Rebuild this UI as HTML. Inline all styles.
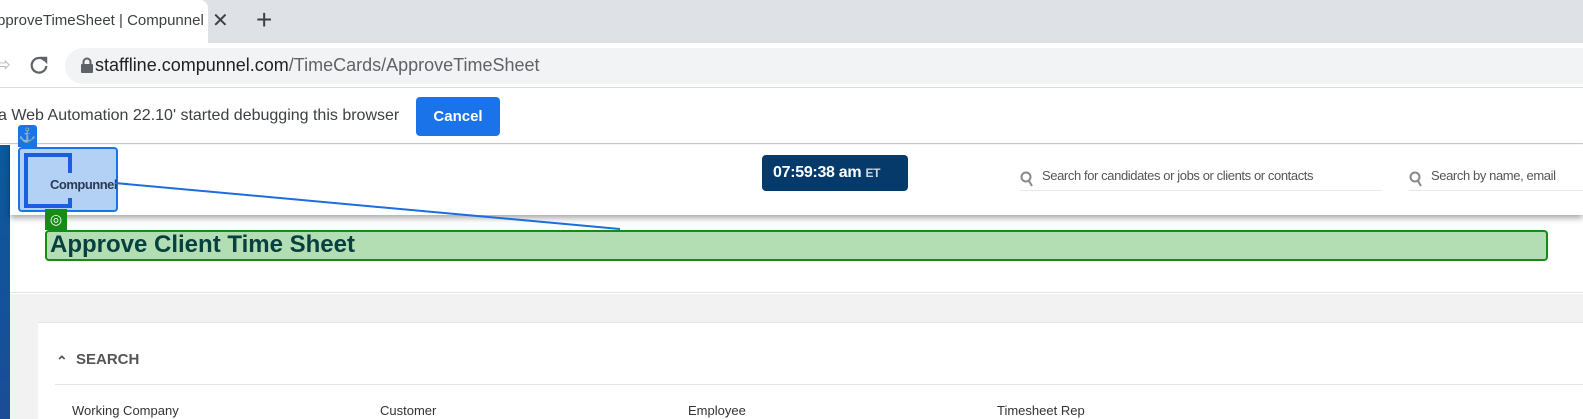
<!DOCTYPE html>
<html><head><style>
*{margin:0;padding:0;box-sizing:border-box}
body{width:1583px;height:419px;overflow:hidden;background:#fff;font-family:"Liberation Sans",sans-serif;position:relative}
.abs{position:absolute;white-space:nowrap}
</style></head><body>
<div class="abs" style="left:0;top:0;width:1583px;height:43px;background:#dee1e6"></div>
<div class="abs" style="left:0;top:0;width:208px;height:43px;background:#fff;border-top-right-radius:8px"></div>
<div class="abs" style="left:-3px;top:12px;font-size:15px;color:#3c4043">pproveTimeSheet | Compunnel</div>
<div class="abs" style="left:212px;top:8px;font-size:20px;color:#3c4043">✕</div>
<div class="abs" style="left:256px;top:4px;font-size:28px;color:#3c4043">+</div>
<div class="abs" style="left:0;top:43px;width:1583px;height:45px;background:#fff;border-bottom:1px solid #dadce0"></div>
<div class="abs" style="left:-6px;top:52px;font-size:20px;color:#bbb">⇨</div>
<svg class="abs" style="left:28px;top:54px" width="22" height="22" viewBox="0 0 24 24"><path d="M18 7A8 8 0 1 0 20 13" fill="none" stroke="#5f6368" stroke-width="2.4"/><path d="M13 3h8v8z" fill="#5f6368"/></svg>
<div class="abs" style="left:65px;top:48px;width:1540px;height:36px;background:#f1f3f4;border-radius:18px"></div>
<svg class="abs" style="left:80px;top:57px" width="14" height="16" viewBox="0 0 14 16"><rect x="1" y="7" width="12" height="9" rx="1" fill="#5f6368"/><path d="M3.5 7V5a3.5 3.5 0 0 1 7 0v2" fill="none" stroke="#5f6368" stroke-width="2"/></svg>
<div class="abs" style="left:95px;top:55px;font-size:18px;color:#202124">staffline.compunnel.com<span style="color:#5f6368">/TimeCards/ApproveTimeSheet</span></div>
<div class="abs" style="left:0;top:89px;width:1583px;height:55px;background:#fff;border-bottom:1px solid #ccc"></div>
<div class="abs" style="left:-2px;top:107px;font-size:16px;color:#3c4043">a Web Automation 22.10' started debugging this browser</div>
<div class="abs" style="left:416px;top:97px;width:84px;height:39px;background:#1a73e8;border-radius:4px;color:#fff;font-size:15px;font-weight:bold;text-align:center;line-height:39px">Cancel</div>
<div class="abs" style="left:0;top:145px;width:10px;height:274px;background:linear-gradient(#0a5a9c,#1b4c98)"></div>
<div class="abs" style="left:10px;top:145px;width:1573px;height:70px;background:#fff;box-shadow:0 3px 6px rgba(0,0,0,.35);z-index:1"></div>
<div class="abs" style="left:10px;top:216px;width:1573px;height:77px;background:#fff;border-bottom:1px solid #e3e3e3"></div>
<div class="abs" style="left:10px;top:294px;width:1573px;height:125px;background:#f2f2f2"></div>
<div class="abs" style="left:38px;top:322px;width:1545px;height:97px;background:#fff;border-top:1px solid #e5e5e5"></div>
<div class="abs" style="left:56px;top:353px;font-size:14px;font-weight:bold;color:#555">&#8963;</div>
<div class="abs" style="left:76px;top:351px;font-size:15px;font-weight:bold;color:#555">SEARCH</div>
<div class="abs" style="left:55px;top:384px;width:1528px;height:1px;background:#e2e5ea"></div>
<div class="abs" style="left:72px;top:403px;font-size:13px;color:#333">Working Company</div>
<div class="abs" style="left:380px;top:403px;font-size:13px;color:#333">Customer</div>
<div class="abs" style="left:688px;top:403px;font-size:13px;color:#333">Employee</div>
<div class="abs" style="left:997px;top:403px;font-size:13px;color:#333">Timesheet Rep</div>
<div style="position:absolute;left:0;top:0;z-index:2">
<div class="abs" style="left:762px;top:155px;width:146px;height:36px;background:#063a6b;border-radius:4px;color:#fff;font-weight:bold;font-size:16px;line-height:36px;padding-left:11px;letter-spacing:-0.3px">07:59:38 am <span style="font-size:12px;color:#cfd6e0">ET</span></div>
<svg class="abs" style="left:1020px;top:171px" width="14" height="16" viewBox="0 0 14 16"><circle cx="6" cy="6" r="4.5" fill="none" stroke="#888" stroke-width="2"/><path d="M9 10l3 5" stroke="#888" stroke-width="2"/></svg>
<div class="abs" style="left:1042px;top:168px;font-size:13px;color:#555;letter-spacing:-0.4px">Search for candidates or jobs or clients or contacts</div>
<div class="abs" style="left:1020px;top:190px;width:362px;height:1px;background:#e8e8e8"></div>
<svg class="abs" style="left:1409px;top:171px" width="14" height="16" viewBox="0 0 14 16"><circle cx="6" cy="6" r="4.5" fill="none" stroke="#888" stroke-width="2"/><path d="M9 10l3 5" stroke="#888" stroke-width="2"/></svg>
<div class="abs" style="left:1431px;top:168px;font-size:13px;color:#555;letter-spacing:-0.4px">Search by name, email</div>
<div class="abs" style="left:1409px;top:190px;width:174px;height:1px;background:#e8e8e8"></div>
<div class="abs" style="left:18px;top:125px;width:19px;height:22px;background:#1a73e8;border-radius:3px 3px 0 0;color:#fff;font-size:14px;text-align:center;line-height:20px">⚓</div>
<div class="abs" style="left:18px;top:147px;width:100px;height:65px;background:#b3d1f5;border:2px solid #1a73e8;border-radius:4px"></div>
<div class="abs" style="left:24px;top:153px;width:48px;height:55px;border:4px solid #1a5fe0;border-right:none"></div>
<div class="abs" style="left:68px;top:153px;width:4px;height:20px;background:#1a5fe0"></div>
<div class="abs" style="left:68px;top:198px;width:4px;height:10px;background:#1a5fe0"></div>
<div class="abs" style="left:50px;top:177px;font-size:13px;font-weight:bold;color:#2b3a55;letter-spacing:-0.5px">Compunnel</div>
<svg class="abs" style="left:0;top:0" width="1583" height="419"><line x1="115" y1="183" x2="620" y2="229" stroke="#1a6fdc" stroke-width="2"/></svg>
<div class="abs" style="left:45px;top:209px;width:22px;height:21px;background:#178a17;color:#fff;font-size:14px;text-align:center;line-height:21px">◎</div>
<div class="abs" style="left:45px;top:230px;width:1503px;height:31px;background:#b3ddb3;border:2px solid #178a17;border-radius:4px"></div>
<div class="abs" style="left:50px;top:231px;font-size:24px;font-weight:bold;color:#06403f">Approve Client Time Sheet</div>
</div>
</body></html>
